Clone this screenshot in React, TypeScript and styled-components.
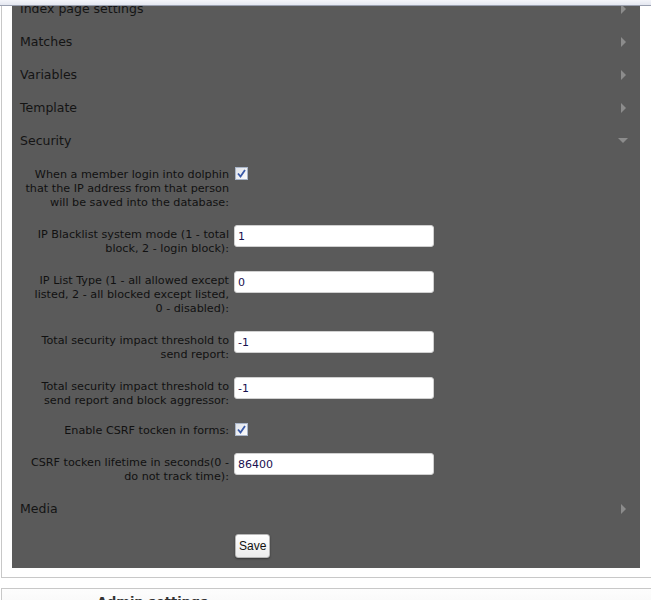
import React from "react";
import styled, { createGlobalStyle } from "styled-components";

const Global = createGlobalStyle`
  html, body { margin: 0; padding: 0; background: #fff; overflow: hidden; }
  body { font-family: "DejaVu Sans", Verdana, sans-serif; }
`;

const TopStrip = styled.div`
  position: fixed;
  top: 0;
  left: 0;
  right: 0;
  height: 5px;
  background: linear-gradient(#f4f5fa, #e4e7f0);
  border-bottom: 1px solid #9aa0b0;
  z-index: 10;
`;

const Page = styled.div`
  width: 662px;
  margin-top: -8px;
`;

const Box = styled.div`
  margin-left: 1px;
  border: 1px solid #c8c8c8;
  border-top: none;
  padding: 0 10px 9px 10px;
`;

const Panel = styled.div`
  width: 628px;
  background: #5a5a5a;
  color: #111;
`;

const Header = styled.div`
  height: 33px;
  display: flex;
  align-items: center;
  justify-content: space-between;
  padding: 0 14px 0 8px;
  font-size: 12.5px;
  color: #141414;
`;

const Arrow = styled.span<{ $open?: boolean }>`
  width: 0;
  height: 0;
  ${(p) =>
    p.$open
      ? `border-left: 5px solid transparent; border-right: 5px solid transparent; border-top: 5px solid #8c8c8c; margin-right: -2px;`
      : `border-top: 5px solid transparent; border-bottom: 5px solid transparent; border-left: 5px solid #8c8c8c;`}
`;

const Content = styled.div`
  padding: 10px 0 8px 0;
  display: flex;
  flex-direction: column;
  gap: 15px;
`;

const Row = styled.div`
  display: grid;
  grid-template-columns: 217px 1fr;
  column-gap: 5px;
  align-items: start;
`;

const Label = styled.div<{ $offset: number }>`
  padding-left: 4px;
  padding-top: ${(p) => p.$offset}px;
  text-align: right;
  font-size: 11.2px;
  line-height: 14px;
  color: #111;
  white-space: nowrap;
`;

const Input = styled.input`
  box-sizing: border-box;
  width: 200px;
  height: 22px;
  margin: 0;
  border: 1px solid #d0d0d0;
  border-radius: 3px;
  background: #fff;
  padding: 0 3px;
  font-family: "DejaVu Sans", Verdana, sans-serif;
  font-size: 11px;
  color: #1a1050;
  outline: none;
`;

const Check = styled.span<{ $top: number }>`
  box-sizing: border-box;
  display: inline-flex;
  align-items: center;
  justify-content: center;
  width: 13px;
  height: 13px;
  margin: ${(p) => p.$top}px 0 0 1px;
  border: 1px solid #a8b4c8;
  background: linear-gradient(135deg, #dfe3ea, #fbfbfc);
`;

const SaveRow = styled.div`
  padding: 9px 0 10px 223px;
`;

const SaveButton = styled.button`
  height: 24px;
  padding: 0 3px;
  border: 1px solid #b8b8b8;
  border-radius: 3px;
  background: linear-gradient(#ffffff, #ececec);
  box-shadow: 0 1px 2px rgba(0, 0, 0, 0.4);
  font-family: "Liberation Sans", Arial, sans-serif;
  font-size: 12px;
  color: #111;
`;

const NextBox = styled.div`
  margin-top: 10px;
  margin-left: 1px;
  border: 1px solid #c8c8c8;
  height: 40px;
  background: linear-gradient(#fdfdfd, #f2f2f2);
`;

const NextTitle = styled.div`
  padding: 5px 0 0 95px;
  font-family: "DejaVu Sans", Verdana, sans-serif;
  font-size: 13px;
  font-weight: bold;
  color: #333;
`;

const CheckIcon = () => (
  <svg width="9" height="9" viewBox="0 0 9 9">
    <path d="M1 4.5 L3.5 7.5 L8 1" fill="none" stroke="#3a5aa8" strokeWidth="1.8" />
  </svg>
);

type Field =
  | { lines: string[]; type: "check"; top: number }
  | { lines: string[]; type: "text"; value: string };

const fields: Field[] = [
  {
    lines: ["When a member login into dolphin", "that the IP address from that person", "will be saved into the database:"],
    type: "check",
    top: 0,
  },
  { lines: ["IP Blacklist system mode (1 - total", "block, 2 - login block):"], type: "text", value: "1" },
  {
    lines: ["IP List Type (1 - all allowed except", "listed, 2 - all blocked except listed,", "0 - disabled):"],
    type: "text",
    value: "0",
  },
  { lines: ["Total security impact threshold to", "send report:"], type: "text", value: "-1" },
  { lines: ["Total security impact threshold to", "send report and block aggressor:"], type: "text", value: "-1" },
  { lines: ["Enable CSRF tocken in forms:"], type: "check", top: 0 },
  { lines: ["CSRF tocken lifetime in seconds(0 -", "do not track time):"], type: "text", value: "86400" },
];

export default function App() {
  return (
    <>
      <Global />
      <TopStrip />
      <Page>
        <Box>
          <Panel>
            <Header>
              Index page settings <Arrow />
            </Header>
            <Header>
              Matches <Arrow />
            </Header>
            <Header>
              Variables <Arrow />
            </Header>
            <Header>
              Template <Arrow />
            </Header>
            <Header>
              Security <Arrow $open />
            </Header>
            <Content>
              {fields.map((f, i) => (
                <Row key={i}>
                  <Label $offset={f.type === "check" ? 1 : 3}>
                    {f.lines.map((l, j) => (
                      <React.Fragment key={j}>
                        {j > 0 && <br />}
                        {l}
                      </React.Fragment>
                    ))}
                  </Label>
                  {f.type === "check" ? (
                    <Check $top={f.top}>
                      <CheckIcon />
                    </Check>
                  ) : (
                    <Input defaultValue={f.value} />
                  )}
                </Row>
              ))}
            </Content>
            <Header>
              Media <Arrow />
            </Header>
            <SaveRow>
              <SaveButton>Save</SaveButton>
            </SaveRow>
          </Panel>
        </Box>
        <NextBox>
          <NextTitle>Admin settings</NextTitle>
        </NextBox>
      </Page>
    </>
  );
}
